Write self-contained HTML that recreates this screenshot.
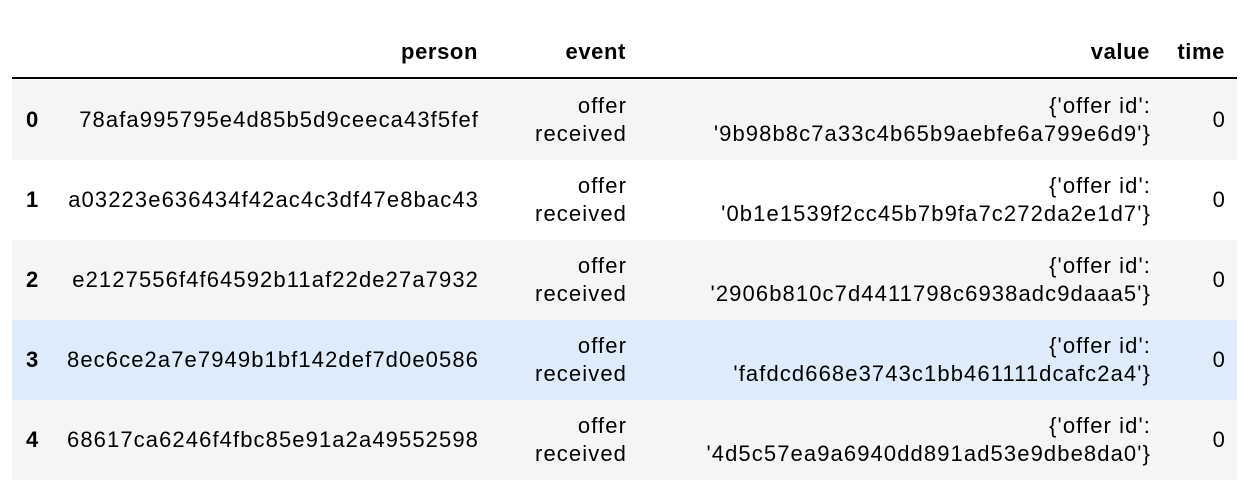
<!DOCTYPE html>
<html><head><style>
body{margin:0;width:1244px;height:488px;background:#fff;font-family:"Liberation Sans",Arial,sans-serif;font-size:22px;letter-spacing:1.1px;color:#000;overflow:hidden;position:relative}
.r{position:absolute;left:12px;width:1225px;height:80px}
.c{position:absolute;text-align:right;line-height:28px;top:50%;transform:translateY(-50%);white-space:nowrap}
.i{left:14px;font-weight:bold;text-align:left}
.p{right:758px}.e{right:610px}.v{right:86px}.t{right:11px}
.h{position:absolute;top:38px;font-weight:bold;line-height:28px;letter-spacing:0.6px}
</style></head><body>
<div class="h" style="right:766px">person</div>
<div class="h" style="right:618px">event</div>
<div class="h" style="right:94px">value</div>
<div class="h" style="right:19px">time</div>
<div style="position:absolute;left:12px;top:77px;width:1225px;height:2px;background:#000"></div>

<div class="r" style="top:80px;background:#f5f5f5"><div class="c i">0</div><div class="c p">78afa995795e4d85b5d9ceeca43f5fef</div><div class="c e">offer<br>received</div><div class="c v">{'offer id':<br>'9b98b8c7a33c4b65b9aebfe6a799e6d9'}</div><div class="c t">0</div></div>
<div class="r" style="top:160px;background:#fff"><div class="c i">1</div><div class="c p">a03223e636434f42ac4c3df47e8bac43</div><div class="c e">offer<br>received</div><div class="c v">{'offer id':<br>'0b1e1539f2cc45b7b9fa7c272da2e1d7'}</div><div class="c t">0</div></div>
<div class="r" style="top:240px;background:#f5f5f5"><div class="c i">2</div><div class="c p">e2127556f4f64592b11af22de27a7932</div><div class="c e">offer<br>received</div><div class="c v">{'offer id':<br>'2906b810c7d4411798c6938adc9daaa5'}</div><div class="c t">0</div></div>
<div class="r" style="top:320px;background:#deebfa"><div class="c i">3</div><div class="c p">8ec6ce2a7e7949b1bf142def7d0e0586</div><div class="c e">offer<br>received</div><div class="c v">{'offer id':<br>'fafdcd668e3743c1bb461111dcafc2a4'}</div><div class="c t">0</div></div>
<div class="r" style="top:400px;background:#f5f5f5"><div class="c i">4</div><div class="c p">68617ca6246f4fbc85e91a2a49552598</div><div class="c e">offer<br>received</div><div class="c v">{'offer id':<br>'4d5c57ea9a6940dd891ad53e9dbe8da0'}</div><div class="c t">0</div></div>
</body></html>
